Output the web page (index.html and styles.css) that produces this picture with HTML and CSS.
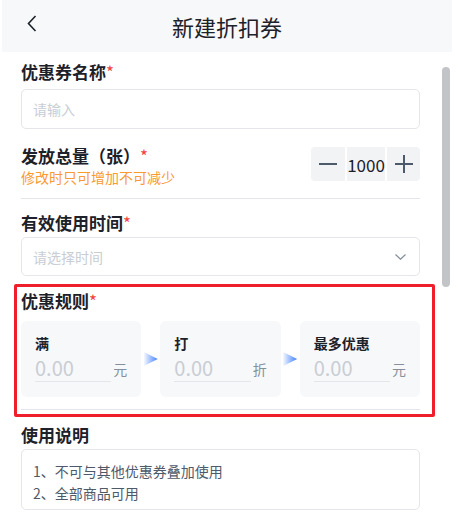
FILE: index.html
```html
<html><head>
<meta charset="utf-8">
<title>新建折扣券</title>
<link rel="stylesheet" href="styles.css">
</head>
<body>
<div class="phone">
    <div class="header">
        <svg class="back" width="10" height="17" viewBox="0 0 10 17"><polyline points="8.5,1 1.5,8.5 8.5,16" fill="none" stroke="#1d2129" stroke-width="1.6"/></svg>
        <span class="title">新建折扣券</span>
    </div>
    <div class="scrollbar"></div>

    <div class="content">
        <div class="field-label">优惠券名称<span class="star">*</span></div>
        <div class="box input"><span class="placeholder">请输入</span></div>

        <div class="qty-row">
            <div>
                <div class="field-label">发放总量（张）<span class="star">*</span></div>
                <div class="hint">修改时只可增加不可减少</div>
            </div>
            <div class="stepper">
                <div class="step-btn left">
                    <svg width="18" height="18" viewBox="0 0 18 18"><line x1="0" y1="9" x2="18" y2="9" stroke="#4e5969" stroke-width="2"/></svg>
                </div>
                <div class="step-num">1000</div>
                <div class="step-btn right">
                    <svg width="18" height="18" viewBox="0 0 18 18"><line x1="0" y1="9" x2="18" y2="9" stroke="#4e5969" stroke-width="2"/><line x1="9" y1="0" x2="9" y2="18" stroke="#4e5969" stroke-width="2"/></svg>
                </div>
            </div>
        </div>

        <div class="field-label spaced">有效使用时间<span class="star">*</span></div>
        <div class="box select">
            <span class="placeholder">请选择时间</span>
            <svg width="11" height="6" viewBox="0 0 11 6"><polyline points="0.5,0.5 5.5,5.3 10.5,0.5" fill="none" stroke="#86909c" stroke-width="1.2"/></svg>
        </div>

        <div class="rules">
            <div class="highlight"></div>
            <div class="field-label">优惠规则<span class="star">*</span></div>
            <div class="cards">
                <div class="card">
                    <div class="card-label">满</div>
                    <div class="card-value"><span class="num">0.00</span><span class="unit">元</span></div>
                </div>
                <div class="arrow"><div class="tri"></div></div>
                <div class="card">
                    <div class="card-label">打</div>
                    <div class="card-value"><span class="num">0.00</span><span class="unit">折</span></div>
                </div>
                <div class="arrow"><div class="tri"></div></div>
                <div class="card">
                    <div class="card-label">最多优惠</div>
                    <div class="card-value"><span class="num">0.00</span><span class="unit">元</span></div>
                </div>
            </div>
        </div>

        <div class="field-label desc-label">使用说明</div>
        <div class="box textarea">
            <div>1、不可与其他优惠券叠加使用</div>
            <div>2、全部商品可用</div>
        </div>
    </div>
</div>
</body>
</html>
```

FILE: styles.css
```css
body {
    margin: 0;
    background: #fff;
    font-family: "Noto Sans CJK SC", "Noto Sans", sans-serif;
    color: #1d2129;
}
.phone {
    position: relative;
    width: 450px;
    height: 524px;
    margin-left: 2px;
    overflow: hidden;
}
.header {
    position: relative;
    height: 52px;
    background: #f7f8fa;
    display: flex;
    align-items: center;
    justify-content: center;
}
.back {
    position: absolute;
    left: 25px;
    top: 15px;
}
.title {
    font-size: 22px;
    line-height: 30px;
}
.scrollbar {
    position: absolute;
    left: 440px;
    top: 67px;
    width: 8px;
    height: 220px;
    border-radius: 4px;
    background: #c2c4c7;
}
.content {
    padding: 8px 32px 0 19px;
}
.field-label {
    font-size: 17px;
    font-weight: 700;
    line-height: 24px;
}
.star {
    color: #f53f3f;
    font-weight: 400;
}
.box {
    box-sizing: border-box;
    border: 1px solid #e5e6eb;
    border-radius: 5px;
    font-size: 14px;
}
.placeholder {
    color: #c9cdd4;
}
.input {
    margin-top: 5px;
    height: 40px;
    padding: 0 11px;
    display: flex;
    align-items: center;
}
.qty-row {
    margin-top: 15px;
    display: flex;
    justify-content: space-between;
    align-items: flex-start;
    padding-bottom: 12px;
    border-bottom: 1px solid #e5e6eb;
}
.hint {
    font-size: 14px;
    line-height: 18px;
    color: #fa9a2f;
}
.stepper {
    margin-top: 3px;
    display: flex;
    gap: 2px;
    height: 34px;
}
.step-btn {
    width: 34px;
    background: #f2f3f5;
    display: flex;
    align-items: center;
    justify-content: center;
}
.step-btn.left { border-radius: 4px 0 0 4px; }
.step-btn.right { border-radius: 0 4px 4px 0; width: 33px; }
.step-num {
    width: 38px;
    background: #f2f3f5;
    font-size: 17px;
    display: flex;
    align-items: center;
    justify-content: center;
}
.spaced {
    margin-top: 12px;
}
.select {
    margin-top: 2px;
    height: 39px;
    padding: 0 13px 0 11px;
    display: flex;
    align-items: center;
    justify-content: space-between;
}
.rules {
    position: relative;
    margin-top: 13px;
    padding-bottom: 12px;
    border-bottom: 1px solid #e5e6eb;
}
.highlight {
    position: absolute;
    left: -7px;
    right: -15px;
    top: -5px;
    bottom: -8px;
    border: 3px solid #ee1f2b;
    border-radius: 2px;
}
.cards {
    margin-top: 8px;
    display: flex;
    align-items: center;
}
.card {
    flex: 1;
    height: 76px;
    box-sizing: border-box;
    padding: 12px 14px 0 14px;
    background: #f7f8fa;
    border-radius: 6px;
}
.card-label {
    font-size: 14px;
    font-weight: 700;
    line-height: 20px;
}
.card-value {
    margin-top: 2px;
    display: flex;
    align-items: center;
}
.num {
    flex: 1;
    font-size: 20px;
    line-height: 26px;
    color: #c9cdd4;
    border-bottom: 1px solid #e5e6eb;
}
.unit {
    margin-left: 1px;
    width: 15px;
    text-align: right;
    font-size: 14px;
    color: #86909c;
}
.arrow {
    width: 19px;
    display: flex;
    justify-content: center;
}
.tri {
    width: 14px;
    height: 14px;
    clip-path: polygon(0 0, 100% 50%, 0 100%);
    background: linear-gradient(to right, rgba(64, 128, 255, 0.05), #4080ff);
}
.desc-label {
    margin-top: 13px;
}
.textarea {
    margin-top: 2px;
    height: 61px;
    padding: 10px 11px;
    line-height: 22px;
    color: #4e5969;
}
```
